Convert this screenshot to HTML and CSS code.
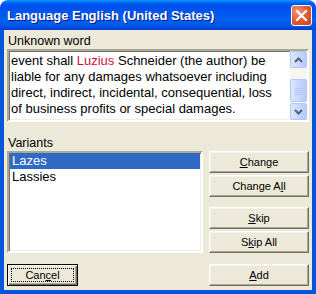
FILE: index.html
```html
<!DOCTYPE html>
<html lang="en">
<head>
    <meta charset="UTF-8">
    <title>Language English (United States)</title>
    <link rel="stylesheet" href="styles.css">
</head>
<body>

<div class="window">
    <div class="titlebar">
        <span class="title">Language English (United States)</span>
        <div class="close-btn">
            <svg width="13" height="13" viewBox="0 0 13 13">
                <path d="M2 2 L11 11 M11 2 L2 11" stroke="#fff" stroke-width="2.2" stroke-linecap="square"/>
            </svg>
        </div>
    </div>

    <div class="client">
        <div class="label">Unknown word</div>
        <div class="memo">
            <div class="memo-text">
                event shall <span class="bad-word">Luzius</span> Schneider (the author) be<br>
                liable for any damages whatsoever including<br>
                direct, indirect, incidental, consequential, loss<br>
                of business profits or special damages.
            </div>
            <div class="scrollbar">
                <div class="sb-btn">
                    <svg width="9" height="6" viewBox="0 0 9 6"><path d="M1 5 L4.5 1.5 L8 5" fill="none" stroke="#4d6185" stroke-width="2"/></svg>
                </div>
                <div class="sb-track">
                    <div class="sb-thumb">
                        <svg width="8" height="8" viewBox="0 0 8 8">
                            <path d="M0 1.5 H8 M0 3.5 H8 M0 5.5 H8 M0 7.5 H8" stroke="#b7c8f6" stroke-width="1"/>
                        </svg>
                    </div>
                </div>
                <div class="sb-btn">
                    <svg width="9" height="6" viewBox="0 0 9 6"><path d="M1 1 L4.5 4.5 L8 1" fill="none" stroke="#4d6185" stroke-width="2"/></svg>
                </div>
            </div>
        </div>

        <div class="label label-variants">Variants</div>
        <div class="variants">
            <ul class="listbox">
                <li class="selected">Lazes</li>
                <li>Lassies</li>
            </ul>
            <div class="actions">
                <button type="button" class="btn"><u>C</u>hange</button>
                <button type="button" class="btn">Change A<u>l</u>l</button>
                <button type="button" class="btn btn-gap"><u>S</u>kip</button>
                <button type="button" class="btn">S<u>k</u>ip All</button>
            </div>
        </div>

        <div class="footer">
            <button type="button" class="btn btn-default"><span class="focus">Can<u>c</u>el</span></button>
            <button type="button" class="btn btn-add"><u>A</u>dd</button>
        </div>
    </div>
</div>

</body>
</html>
```

FILE: styles.css
```css
body {
    margin: 0;
    padding: 0;
    background-color: #ffffff;
    font-family: 'Liberation Sans', Arial, sans-serif;
}

.window {
    width: 316px;
    height: 294px;
    display: flex;
    flex-direction: column;
}

.titlebar {
    height: 30px;
    flex-shrink: 0;
    display: flex;
    align-items: center;
    justify-content: space-between;
    padding: 0 4px 0 7px;
    box-sizing: border-box;
    border-radius: 8px 8px 0 0;
    background: linear-gradient(to bottom, #0997ff 0px, #0053ee 4px, #0050ee 8px, #0058f0 14px, #0161ef 20px, #0055e5 26px, #003dd7 30px);
}

.title {
    color: #ffffff;
    font-weight: bold;
    font-size: 13px;
    text-shadow: 1px 1px 0 #0a1883;
    margin-top: 1px;
}

.close-btn {
    width: 21px;
    height: 21px;
    box-sizing: border-box;
    border: 1px solid #ffffff;
    border-radius: 3px;
    background: radial-gradient(circle at 30% 30%, #f09877 0%, #e25d38 45%, #c9431d 100%);
    display: flex;
    align-items: center;
    justify-content: center;
    margin-top: 1px;
}

.client {
    flex: 1;
    background-color: #ece9d8;
    border: 4px solid #0855dd;
    border-top: none;
    padding: 3px 3px 4px 3px;
    display: flex;
    flex-direction: column;
    font-size: 12.5px;
    color: #000000;
}

.label {
    height: 16px;
    line-height: 16px;
    padding-left: 1px;
}

.label-variants {
    margin-top: 13px;
}

.memo {
    height: 73px;
    box-sizing: border-box;
    border: 2px solid;
    border-color: #aca899 #ffffff #ffffff #aca899;
    box-shadow: inset 1px 1px 0 #716f64, inset -1px -1px 0 #f1efe2;
    background-color: #ffffff;
    display: flex;
}

.memo-text {
    flex: 1;
    padding: 2px 0 0 2px;
    font-size: 13px;
    line-height: 16px;
    white-space: nowrap;
    overflow: hidden;
}

.bad-word {
    color: #d0103a;
}

.scrollbar {
    width: 17px;
    display: flex;
    flex-direction: column;
    background-color: #f6f5ef;
}

.sb-btn, .sb-thumb {
    box-sizing: border-box;
    border: 1px solid #b3c7f5;
    border-radius: 2px;
    background: linear-gradient(to right, #dde7fe, #c4d4fc 60%, #b6c9f7);
    display: flex;
    align-items: center;
    justify-content: center;
}

.sb-btn {
    height: 17px;
}

.sb-track {
    flex: 1;
    padding-top: 11px;
}

.sb-thumb {
    height: 23px;
}

.variants {
    display: flex;
    gap: 6px;
    height: 102px;
}

.listbox {
    width: 197px;
    margin: 0;
    padding: 0;
    list-style: none;
    box-sizing: border-box;
    border: 2px solid;
    border-color: #aca899 #ffffff #ffffff #aca899;
    box-shadow: inset 1px 1px 0 #716f64, inset -1px -1px 0 #f1efe2;
    background-color: #ffffff;
    padding: 0 1px;
    font-size: 13px;
}

.listbox li {
    height: 16px;
    line-height: 16px;
    padding-left: 2px;
}

.listbox li:first-child {
    margin-top: 0;
}

.listbox .selected {
    background-color: #316ac5;
    color: #ffffff;
}

.actions {
    width: 100px;
    display: flex;
    flex-direction: column;
    gap: 2px;
}

.btn {
    height: 22px;
    width: 100px;
    padding: 0;
    box-sizing: border-box;
    font-family: 'Liberation Sans', Arial, sans-serif;
    font-size: 11px;
    color: #000000;
    background-color: #ece9d8;
    border: 1px solid;
    border-color: #ffffff #716f64 #716f64 #ffffff;
    box-shadow: inset -1px -1px 0 #aca899, inset 1px 1px 0 #f5f4ee;
}

.btn-gap {
    margin-top: 8px;
}

.footer {
    display: flex;
    justify-content: space-between;
    margin-top: 11px;
}

.btn-default {
    width: 71px;
    border: 1px solid #000000;
    box-shadow: inset 1px 1px 0 #ffffff, inset -1px -1px 0 #716f64, inset -2px -2px 0 #aca899;
    display: flex;
    padding: 3px;
}

.btn-default .focus {
    flex: 1;
    border: 1px dotted #000000;
    display: flex;
    align-items: center;
    justify-content: center;
}
```
